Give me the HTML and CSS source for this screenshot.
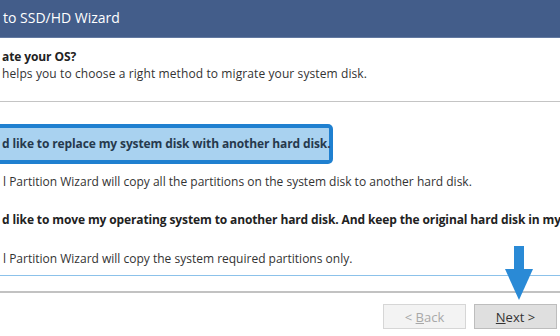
FILE: index.html
```html
<!DOCTYPE html>
<html lang="en">

<head>
    <meta charset="UTF-8">
    <meta name="viewport" content="width=device-width, initial-scale=1.0">
    <title>Migrate OS to SSD/HD Wizard</title>
    <link rel="stylesheet" href="styles.css">
</head>

<body>
    <div class="wizard">
        <div class="title-bar">to SSD/HD Wizard</div>

        <div class="intro">
            <h2>ate your OS?</h2>
            <p>helps you to choose a right method to migrate your system disk.</p>
        </div>

        <hr class="separator">

        <div class="options">
            <div class="option selected">d like to replace my system disk with another hard disk.</div>
            <p class="option-desc">l Partition Wizard will copy all the partitions on the system disk to another hard disk.</p>

            <div class="option">d like to move my operating system to another hard disk. And keep the original hard disk in my</div>
            <p class="option-desc">l Partition Wizard will copy the system required partitions only.</p>
        </div>

        <div class="blue-line"></div>
        <div class="footer-line"></div>

        <div class="actions">
            <button class="btn" disabled>&lt; <u>B</u>ack</button>
            <button class="btn primary"><u>N</u>ext &gt;</button>
        </div>

        <svg class="hint-arrow" width="28" height="54" viewBox="0 0 28 54">
            <rect x="9" y="0" width="10" height="25" fill="#2a8ad6" />
            <polygon points="0,23 28,23 14,54" fill="#2a8ad6" />
        </svg>
    </div>
</body>

</html>
```

FILE: styles.css
```css
* {
    box-sizing: border-box;
    margin: 0;
    padding: 0;
}

body {
    background-color: #fff;
    font-family: 'Open Sans', 'Noto Sans', sans-serif;
    font-size: 12px;
    color: #333;
    overflow: hidden;
}

.wizard {
    position: relative;
    width: 560px;
    height: 336px;
    overflow: hidden;
}

.title-bar {
    height: 38px;
    line-height: 36px;
    padding-left: 3px;
    background-color: #435d8a;
    border-bottom: 1px solid #6279a1;
    color: #fff;
    font-size: 14px;
    white-space: nowrap;
}

.intro {
    margin-top: 10px;
    padding-left: 2px;
}

.intro h2 {
    font-size: 12px;
    font-weight: bold;
    line-height: 17px;
    color: #222;
    letter-spacing: -0.1px;
}

.intro p {
    line-height: 17px;
    letter-spacing: 0.1px;
}

.separator {
    border: none;
    border-top: 1px solid #c4c4c4;
    margin-top: 19px;
}

.options {
    margin-top: 22px;
    white-space: nowrap;
}

.option {
    font-weight: bold;
    line-height: 17px;
    color: #222;
    padding-left: 2px;
    letter-spacing: -0.12px;
}

.option.selected {
    width: 333px;
    height: 40px;
    line-height: 32px;
    padding-left: 2px;
    background-color: #a9d2f0;
    border: 4px solid #1f80d0;
    border-left: none;
    border-radius: 0 5px 5px 0;
    color: #26394d;
}

.option-desc {
    line-height: 17px;
    padding-left: 3px;
    margin-top: 9px;
    margin-bottom: 21px;
}

.options .option-desc:last-child {
    margin-top: 22px;
    margin-bottom: 0;
}

.blue-line {
    margin-top: 8px;
    height: 1px;
    background-color: #8cc2ea;
}

.footer-line {
    margin-top: 15px;
    height: 2px;
    background-color: #c2c2c2;
}

.actions {
    display: flex;
    justify-content: flex-end;
    gap: 8px;
    margin-top: 11px;
    padding-right: 3px;
}

.btn {
    width: 83px;
    height: 25px;
    font-family: 'Open Sans', 'Noto Sans', sans-serif;
    font-size: 13px;
    background-color: #f3f3f3;
    border: 1px solid #d6d6d6;
    color: #a8a8a8;
}

.btn.primary {
    background-color: #dfdfdf;
    border-color: #bdbdbd;
    color: #333;
    cursor: pointer;
}

.hint-arrow {
    position: absolute;
    left: 505px;
    top: 246px;
}
```
